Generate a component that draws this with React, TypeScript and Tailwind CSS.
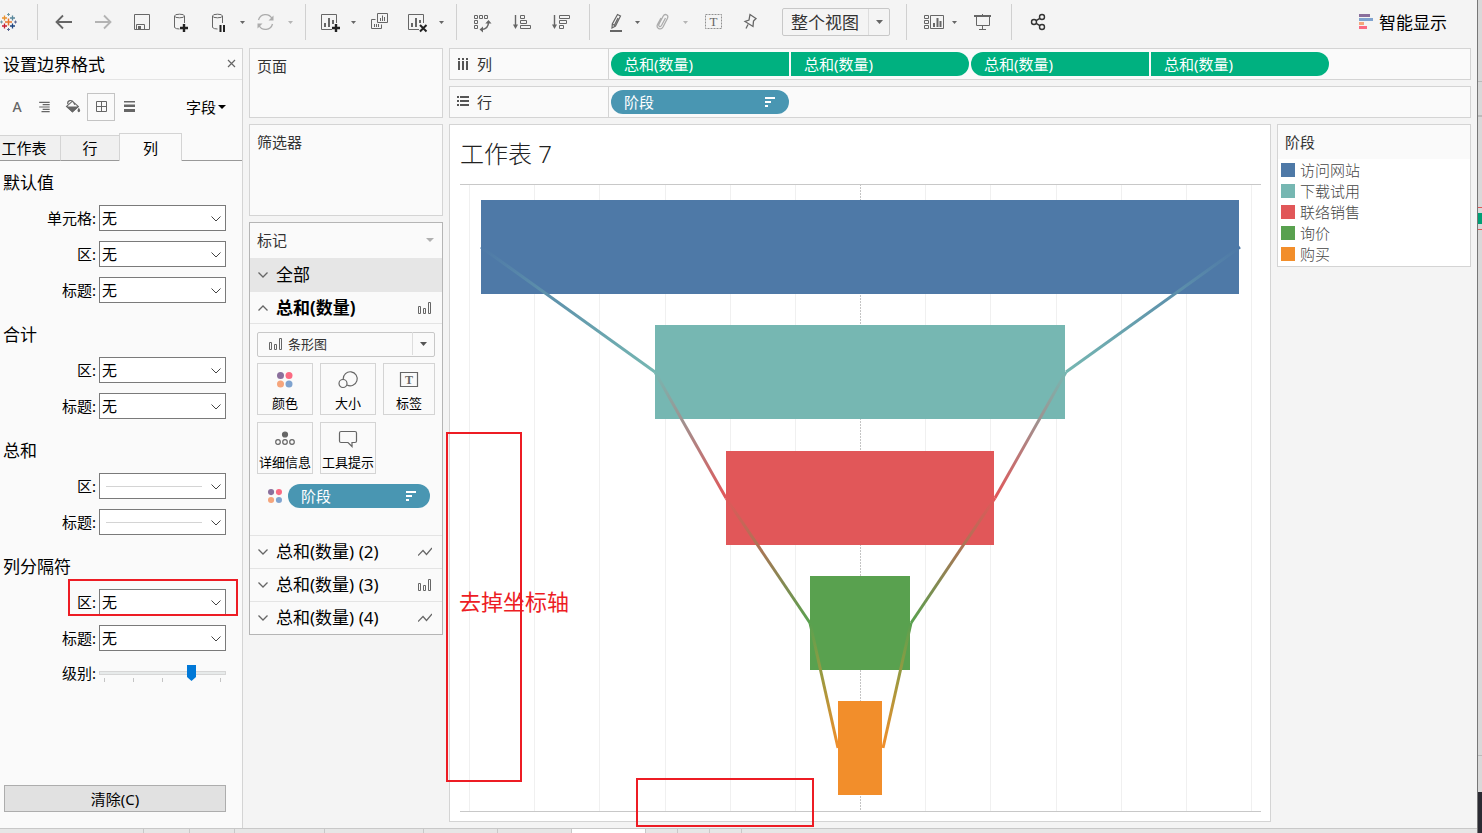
import type { ReactNode } from "react";

const shelfPills = [
  { label: "总和(数量)", shape: "rounded-l-full" },
  { label: "总和(数量)", shape: "rounded-r-full" },
  { label: "总和(数量)", shape: "rounded-l-full" },
  { label: "总和(数量)", shape: "rounded-r-full" },
];

const stages = [
  { name: "访问网站", color: "#4e79a7", swatch: "bg-[#4e79a7]", x: 21, width: 758, y: 16 },
  { name: "下载试用", color: "#76b7b2", swatch: "bg-[#76b7b2]", x: 195, width: 410, y: 141 },
  { name: "联络销售", color: "#e15759", swatch: "bg-[#e15759]", x: 266, width: 268, y: 267 },
  { name: "询价", color: "#59a14f", swatch: "bg-[#59a14f]", x: 350, width: 100, y: 392 },
  { name: "购买", color: "#f28e2b", swatch: "bg-[#f28e2b]", x: 378, width: 44, y: 517 },
];

const sections = [
  { title: "默认值", rows: [["单元格:", "无"], ["区:", "无"], ["标题:", "无"]] },
  { title: "合计", rows: [["区:", "无"], ["标题:", "无"]] },
  { title: "总和", rows: [["区:", ""], ["标题:", ""]] },
  { title: "列分隔符", rows: [["区:", "无"], ["标题:", "无"]] },
];

function Icon({ children, className = "size-6" }: { children: ReactNode; className?: string }) {
  return (
    <svg viewBox="0 0 24 24" className={className} fill="none" stroke="currentColor" strokeWidth="1" aria-hidden="true">
      {children}
    </svg>
  );
}

function Tool({ label, className = "", children }: { label: string; className?: string; children: ReactNode }) {
  return (
    <button aria-label={label} className={`size-6 shrink-0 text-[#666] ${className}`}>
      <Icon>{children}</Icon>
    </button>
  );
}

function Caret({ label, className = "" }: { label: string; className?: string }) {
  return (
    <button aria-label={label} className={`flex h-6 w-2.5 shrink-0 items-center justify-center ${className}`}>
      <svg viewBox="0 0 5 3" className="h-[3px] w-[5px]" fill="currentColor" aria-hidden="true">
        <path d="M0 0h5L2.500 3z" />
      </svg>
    </button>
  );
}

function Separator({ className = "" }: { className?: string }) {
  return <div className={`h-9 w-px shrink-0 bg-[#d0d0d0] ${className}`} />;
}

function Cylinder() {
  return (
    <>
      <ellipse cx="12.5" cy="6" rx="5" ry="1.8" />
      <path d="M7.500 6v11.500q1.500 1.500 5 1.500M17.500 6v7" />
    </>
  );
}

function Toolbar() {
  return (
    <header className="flex h-12 shrink-0 items-center pb-1">
      <svg viewBox="0 0 18 18" className="size-[18px] shrink-0" fill="none" aria-hidden="true">
        <path d="M8.500 5.500v7M5 9h7" stroke="#e8762d" strokeWidth="1.500" />
        <path d="M4.500 2.500v5M2 5h5" stroke="#eb912c" strokeWidth="1.300" />
        <path d="M12.500 2.500v5M10 5h5" stroke="#59879b" strokeWidth="1.300" />
        <path d="M4.500 10.500v5M2 13h5" stroke="#c72035" strokeWidth="1.300" />
        <path d="M12.500 10.500v5M10 13h5" stroke="#1f447e" strokeWidth="1.300" />
        <path d="M8.500 0v3M7 1.500h3M0 9h3M1.500 7.500v3" stroke="#7099a6" />
        <path d="M14 9h3M15.500 7.500v3M8.500 15v3M7 16.500h3" stroke="#5c6692" />
      </svg>
      <Separator className="ml-[19px]" />
      <div className="ml-[15px] flex gap-3.5">
        <Tool label="撤消"><path d="M3.500 12H19M10 5.500L3.500 12l6.500 6.500" strokeWidth="1.800" /></Tool>
        <Tool label="重做" className="opacity-45"><path d="M4 12h15.500M13 5.500l6.500 6.500-6.500 6.500" strokeWidth="1.800" /></Tool>
        <Tool label="保存">
          <path d="M5.500 4.500h15v15h-15zM7.500 19.500v-5h8v5" />
          <path d="M9 16h3v3.500H9z" fill="currentColor" stroke="none" />
        </Tool>
        <Tool label="新建数据源">
          <Cylinder />
          <path d="M17 14v8M13 18h8" stroke="#222" strokeWidth="2.400" />
        </Tool>
        <Tool label="暂停自动更新">
          <Cylinder />
          <path d="M15.500 15v7M19 15v7" stroke="#222" strokeWidth="2" />
        </Tool>
      </div>
      <Caret label="更新选项" className="ml-2 text-[#666]" />
      <Tool label="运行更新" className="ml-1.5 opacity-50">
        <path d="M5.500 10a7.300 7.300 0 0 1 13.500-1.500M19.500 14a7.300 7.300 0 0 1-13.500 1.500" strokeWidth="1.300" />
        <path d="M20.500 5.500v5h-5zM4.500 18.500v-5h5z" fill="currentColor" stroke="none" />
      </Tool>
      <Caret label="运行选项" className="ml-2 text-[#b5b5b5]" />
      <Separator className="ml-2.5" />
      <Tool label="新建工作表" className="ml-3">
        <path d="M14 19.500H3.500v-15h15V13" />
        <path d="M7 17v-4M11 17V8M15 14v-4" strokeWidth="2" />
        <path d="M18 14v8M14 18h8" stroke="#222" strokeWidth="2.400" />
      </Tool>
      <Caret label="新建选项" className="ml-1.5 text-[#666]" />
      <Tool label="复制工作表" className="ml-2.5">
        <path d="M9.500 3.500h10v9h-10zM7.500 9.500h-4v9h10v-4" />
        <path d="M12.500 11V8M14.500 11V5.500M16.500 11V7M6.500 17v-3M8.500 17v-3M10.500 17v-3" />
      </Tool>
      <Tool label="清除工作表" className="ml-3.5">
        <path d="M13 19.500H2.500v-15h15V13" />
        <path d="M6 17v-4M10 17V8M14 13v-3" strokeWidth="2" />
        <path d="M14 15l6.500 6.500M20.500 15L14 21.500" stroke="#222" strokeWidth="2" />
      </Tool>
      <Caret label="清除选项" className="ml-1.5 text-[#666]" />
      <Separator className="ml-2.5" />
      <Tool label="交换行和列" className="ml-3.5">
        <path d="M3.500 5.500h3v3h-3zM8.500 5.500h3v3h-3zM13.500 5.500h3v3h-3zM3.500 10.500h3v3h-3zM3.500 15.500h3v3h-3z" />
        <path d="M17.500 12q0 7-7 7.500" strokeWidth="1.500" />
        <path d="M14.300 13.500l3.200-3.500 3 3.500zM12 16.500l-3.500 3 3.500 3z" fill="currentColor" stroke="none" />
      </Tool>
      <Tool label="升序排序" className="ml-3.5">
        <path d="M6.500 5v11" strokeWidth="1.400" />
        <path d="M4 14.500h5L6.500 19z" fill="currentColor" stroke="none" />
        <path d="M11.500 5.500h4v3h-4zM11.500 10.500h6v3h-6zM11.500 15.500h10v3h-10z" />
      </Tool>
      <Tool label="降序排序" className="ml-4">
        <path d="M5.500 5v11" strokeWidth="1.400" />
        <path d="M3 14.500h5L5.500 19z" fill="currentColor" stroke="none" />
        <path d="M10.500 5.500h10v3h-10zM10.500 10.500h7v3h-7zM10.500 15.500h4v3h-4z" />
      </Tool>
      <Separator className="ml-4" />
      <Tool label="突出显示" className="ml-3">
        <path d="M15.500 4.500l3 1.500-5 10-3.500 2 .3-4z M10.300 14l3.200 2M16 8l-3.500 7" strokeWidth="1.200" />
        <path d="M8 21h12" strokeWidth="2" />
      </Tool>
      <Caret label="突出显示选项" className="ml-1.5 text-[#666]" />
      <Tool label="组成员" className="ml-2 opacity-50">
        <path d="M15.500 8l-4 7.500c-1.200 2-3.500 1-2.600-1.200l4.200-8c1.800-3.200 6-1.500 4.400 2l-4.500 8.700c-2 3.500-7.500 1.500-5.500-2.500l3.500-6.500" strokeWidth="1.300" />
      </Tool>
      <Caret label="组选项" className="ml-1.5 text-[#b5b5b5]" />
      <Tool label="显示标记标签" className="ml-3">
        <path d="M3.500 4.500h16v14h-16z" strokeDasharray="2 1" opacity=".7" />
        <text x="11.500" y="16" textAnchor="middle" fill="currentColor" stroke="none" className="font-['Liberation_Serif',serif] text-[13px]">T</text>
      </Tool>
      <Tool label="固定轴" className="ml-3">
        <path d="M12 4.500l6 4-2.500 2.500-.5 5.500-8-5 4-1.500zM10 14.500l-2 4" strokeWidth="1.300" />
      </Tool>
      <div className="relative ml-5 h-7 w-[108px] shrink-0">
        <select aria-label="适合" className="h-full w-full appearance-none rounded-xs border border-[#c8c8c8] pt-0.5 pl-2 text-[17px] leading-6 text-[#333]">
          <option>整个视图</option>
        </select>
        <span className="pointer-events-none absolute inset-y-px right-px flex w-[21px] items-center justify-center border-l border-[#ddd] text-[#666]">
          <svg viewBox="0 0 7 4" className="h-1 w-[7px]" fill="currentColor"><path d="M0 0h7L3.500 4z" /></svg>
        </span>
      </div>
      <Separator className="ml-4" />
      <Tool label="显示/隐藏卡" className="ml-3.5">
        <path d="M3.500 5.500h4v3h-4zM3.500 10.500h4v3h-4zM3.500 15.500h4v3h-4zM9.500 5.500h13v13h-13z" />
        <path d="M13 17v-4M16.500 17V8M19.500 17v-6" strokeWidth="2" />
      </Tool>
      <Caret label="卡选项" className="ml-1 text-[#666]" />
      <Tool label="演示模式" className="ml-3">
        <path d="M3 6h17" strokeWidth="2" />
        <path d="M5.500 6v9.500h13V6M11.500 4v2M11.500 15.500v4M8 19.500h7" />
      </Tool>
      <Separator className="ml-4" />
      <Tool label="共享" className="ml-3.5">
        <g stroke="#333" strokeWidth="1.400">
          <path d="M13.800 8.300l-3.600 2.400M10.200 13.300l3.600 2.400" />
          <circle cx="8" cy="12" r="2.500" />
          <circle cx="16" cy="7" r="2.500" />
          <circle cx="16" cy="17" r="2.500" />
        </g>
      </Tool>
      <button className="mr-[30px] ml-auto flex shrink-0 items-center gap-1.5 pt-0.5 text-[17px] leading-6">
        <svg viewBox="0 0 14 16" className="mb-0.5 h-4 w-3.5" aria-hidden="true">
          <path d="M0 0h11v3H0z" fill="#8a6f9c" />
          <path d="M0 4h14v3H0z" fill="#7fa3cf" />
          <path d="M0 8h5v3H0z" fill="#f5a57c" />
          <path d="M0 12h8v3H0z" fill="#fb6a82" />
        </svg>
        智能显示
      </button>
    </header>
  );
}

function FormatRow({ id, label, value }: { id: string; label: string; value: string }) {
  return (
    <div className="flex h-[26px] items-center gap-[3px]">
      <label htmlFor={id} className="w-24 text-right">{label}</label>
      <div className="relative h-[26px] flex-1">
        <select id={id} className="h-full w-full appearance-none border border-[#7a7a7a] bg-white pl-0.5">
          <option>{value}</option>
        </select>
        {value === "" && <span className="pointer-events-none absolute top-1/2 right-6 left-[7px] h-px bg-[#d4d4d4]" />}
        <svg viewBox="0 0 10 6" className="pointer-events-none absolute top-[11px] right-[5px] h-1.5 w-2.5" fill="none" stroke="#444" aria-hidden="true">
          <path d="M.5.500L5 5 9.500.500" />
        </svg>
      </div>
    </div>
  );
}

function FormatPanel() {
  return (
    <aside className="flex w-[243px] shrink-0 flex-col border-t border-r border-[#d4d4d4] bg-[#fafafa] text-[15px] leading-5">
      <div className="flex h-[31px] items-center justify-between border-b border-[#e4e4e4] pt-0.5 pr-1.5 pl-[3px]">
        <h2 className="text-[17px] leading-6">设置边界格式</h2>
        <button aria-label="关闭" className="mb-1">
          <svg viewBox="0 0 9 9" className="size-[9px]" stroke="#666" strokeWidth="1.200"><path d="M1 1l7 7M8 1L1 8" /></svg>
        </button>
      </div>
      <div className="flex h-[53px] items-center pr-4 pl-[3px] text-[#666]">
        <button aria-label="字体" className="size-7 text-sm leading-7 font-medium">A</button>
        <button aria-label="对齐" className="size-7"><Icon className="size-7">
          <path d="M7 8h9M10 10h6M7 12h9M10 14h6M9 16h7" />
        </Icon></button>
        <button aria-label="阴影" className="size-7"><Icon className="size-7">
          <path d="M6.500 11.500l5-4.500 5 4.500-5 4.500zM7.500 9.500c-.5-3.500 3.500-4 5-1.500l1 2" />
          <path d="M6.500 11.500h10.500l-5.500 5.300zM17 12.500l1.200 2.300q-.2 1.800-1.200 1.800t-1.200-1.800z" fill="currentColor" stroke="none" />
        </Icon></button>
        <button aria-label="边界" aria-pressed="true" className="flex size-7 items-center justify-center border border-[#c4c4c4]">
          <svg viewBox="0 0 11 11" className="size-[11px]" fill="none" stroke="currentColor"><path d="M.5.500h10v10H.5zM5.500 0v11M0 5.500h11" /></svg>
        </button>
        <button aria-label="线" className="flex size-7 items-center justify-center">
          <svg viewBox="0 0 11 11" className="size-[11px]" fill="currentColor"><path d="M0 0h11v1.500H0zM0 3.500h11V6H0zM0 8h11v3H0z" /></svg>
        </button>
        <button className="ml-auto flex items-center gap-0.5 text-black">
          字段
          <svg viewBox="0 0 8 4" className="h-1 w-2" fill="currentColor"><path d="M0 0h8L4 4z" /></svg>
        </button>
      </div>
      <div role="tablist" className="flex h-7 items-end">
        <button role="tab" className="h-[26px] w-[61px] border-t border-r border-b border-[#d4d4d4] border-b-[#999] bg-[#f0f0f0] pr-3">工作表</button>
        <button role="tab" className="h-[26px] w-[58px] border-t border-b border-[#d4d4d4] border-b-[#999] bg-[#f0f0f0]">行</button>
        <button role="tab" aria-selected="true" className="h-7 w-[63px] border-x border-t border-[#d4d4d4]">列</button>
        <div className="h-full flex-1 border-b border-[#999]" />
      </div>
      <div className="space-y-5 pt-2.5 pr-4">
        {sections.map((section, i) => (
          <section key={section.title} className="space-y-2.5">
            <h3 className="pl-[3px] text-[17px] leading-6">{section.title}</h3>
            {section.rows.map(([label, value], j) => (
              <FormatRow key={j} id={`border-${i}-${j}`} label={label} value={value} />
            ))}
            {i === sections.length - 1 && (
              <div className="flex h-6 items-center gap-[3px]">
                <label htmlFor="level" className="w-24 text-right">级别:</label>
                <div className="relative flex h-4 flex-1 items-center">
                  <input
                    id="level"
                    type="range"
                    min="0"
                    max="4"
                    defaultValue="3"
                    className="h-4 w-full appearance-none bg-transparent [&::-webkit-slider-runnable-track]:h-1 [&::-webkit-slider-runnable-track]:border [&::-webkit-slider-runnable-track]:border-[#d6d6d6] [&::-webkit-slider-runnable-track]:bg-[#e7eaea] [&::-webkit-slider-thumb]:-mt-[7px] [&::-webkit-slider-thumb]:h-4 [&::-webkit-slider-thumb]:w-[9px] [&::-webkit-slider-thumb]:appearance-none [&::-webkit-slider-thumb]:bg-[#0078d7] [&::-webkit-slider-thumb]:[clip-path:polygon(0_0,100%_0,100%_75%,50%_100%,0_75%)]"
                  />
                  <div className="pointer-events-none absolute inset-x-[5px] top-[13px] flex justify-between">
                    {[0, 1, 2, 3, 4].map((tick) => (
                      <span key={tick} className={tick === 3 ? "h-1 w-px" : "h-1 w-px bg-[#c4c4c4]"} />
                    ))}
                  </div>
                </div>
              </div>
            )}
          </section>
        ))}
      </div>
      <button className="mt-auto mr-4 mb-4 ml-1 h-[27px] border border-[#adadad] bg-[#e1e1e1]">清除(C)</button>
    </aside>
  );
}

function BarsIcon() {
  return (
    <svg viewBox="0 0 14 12" className="h-3 w-3.5 shrink-0" fill="none" stroke="#666" aria-hidden="true">
      <path d="M.5 4.500h2v7h-2zM5.500 6.500h2v5h-2zM10.500.500h2v11h-2z" />
    </svg>
  );
}

function LineIcon() {
  return (
    <svg viewBox="0 0 14 12" className="h-3 w-3.5 shrink-0" fill="none" stroke="#666" strokeWidth="1.200" aria-hidden="true">
      <path d="M0 9.500l5-5 3.500 4L14 2" />
    </svg>
  );
}

function Chevron({ up = false }: { up?: boolean }) {
  return (
    <svg viewBox="0 0 10 6" className="h-1.5 w-2.5 shrink-0" fill="none" stroke="#666" strokeWidth="1.300" aria-hidden="true">
      <path d={up ? "M.5 5.500L5 1l4.500 4.500" : "M.5.500L5 5 9.500.500"} />
    </svg>
  );
}

function ColorDots({ className }: { className: string }) {
  return (
    <svg viewBox="0 0 16 16" className={className} aria-hidden="true">
      <circle cx="3.500" cy="3.500" r="3.500" fill="#8a6f9c" />
      <circle cx="12.500" cy="3.500" r="3.500" fill="#fb6a82" />
      <circle cx="3.500" cy="12.500" r="3.500" fill="#f5a57c" />
      <circle cx="12.500" cy="12.500" r="3.500" fill="#7fa3cf" />
    </svg>
  );
}

function SortedPill({ className }: { className: string }) {
  return (
    <button className={`flex h-6 items-center justify-between rounded-full bg-[#4996b2] pr-3.5 pl-[13px] text-[15px] leading-5 text-white ${className}`}>
      阶段
      <svg viewBox="0 0 10 10" className="size-2.5" fill="currentColor" aria-hidden="true">
        <path d="M0 0h10v2H0zM0 4h6v2H0zM0 8h3v2H0z" />
      </svg>
    </button>
  );
}

function MarkTile({ label, children }: { label: string; children: ReactNode }) {
  return (
    <button className="flex h-[52px] flex-col items-center justify-between border border-[#d4d4d4] pt-1 pb-0.5 text-[13px] leading-[18px] whitespace-nowrap">
      <Icon>{children}</Icon>
      {label}
    </button>
  );
}

function MarksCard() {
  return (
    <section className="border border-[#b5b5b5] bg-[#fafafa]">
      <div className="flex h-[35px] items-center justify-between pr-2 pb-0.5 pl-[7px]">
        <h2 className="text-[15px] leading-5 text-[#333]">标记</h2>
        <svg viewBox="0 0 8 4" className="h-1 w-2" fill="#b0b0b0"><path d="M0 0h8L4 4z" /></svg>
      </div>
      <button className="flex h-[34px] w-full items-center gap-2 bg-[#e6e6e6] pl-2 text-[17px] leading-6">
        <Chevron />全部
      </button>
      <button className="flex h-8 w-full items-center gap-2 border-b border-[#e4e4e4] pr-2.5 pl-2 text-[17px] leading-6 font-bold">
        <Chevron up />
        <span className="flex-1 text-left">总和(数量)</span>
        <BarsIcon />
      </button>
      <div className="px-[7px] pt-[7px] pb-[27px]">
        <div className="relative h-[25px]">
          <select aria-label="标记类型" className="h-full w-full appearance-none rounded-xs border border-[#c8c8c8] pl-[30px] text-[13px] leading-5 text-[#333]">
            <option>条形图</option>
          </select>
          <span className="pointer-events-none absolute inset-y-0 left-3 flex items-center"><BarsIcon /></span>
          <span className="pointer-events-none absolute inset-y-px right-px flex w-[22px] items-center justify-center border-l border-[#ddd] text-[#555]">
            <svg viewBox="0 0 7 4" className="h-1 w-[7px]" fill="currentColor"><path d="M0 0h7L3.500 4z" /></svg>
          </span>
        </div>
        <div className="mt-[7px] grid grid-cols-[56px_56px_52px] gap-[7px]">
          <MarkTile label="颜色">
            <g stroke="none">
              <circle cx="7.500" cy="7.500" r="3.500" fill="#8a6f9c" />
              <circle cx="16" cy="7.500" r="3.500" fill="#fb6a82" />
              <circle cx="7.500" cy="16" r="3.500" fill="#f5a57c" />
              <circle cx="16" cy="16" r="3.500" fill="#7fa3cf" />
            </g>
          </MarkTile>
          <MarkTile label="大小">
            <g stroke="#666" strokeWidth="1.200">
              <path d="M7.200 11a7 7 0 1 1 3.800 6" />
              <circle cx="7" cy="15.500" r="4" />
            </g>
          </MarkTile>
          <MarkTile label="标签">
            <g stroke="#666">
              <path d="M3.500 4.500h17v14h-17z" strokeWidth="1.200" />
              <text x="12" y="15.500" textAnchor="middle" fill="#666" stroke="none" className="font-['Liberation_Serif',serif] text-[12px] font-bold">T</text>
            </g>
          </MarkTile>
          <MarkTile label="详细信息">
            <g stroke="#666" strokeWidth="1.200">
              <circle cx="12" cy="7.500" r="2.500" fill="#666" />
              <circle cx="5" cy="15" r="2.300" />
              <circle cx="12" cy="15" r="2.300" />
              <circle cx="19" cy="15" r="2.300" />
            </g>
          </MarkTile>
          <MarkTile label="工具提示">
            <path d="M5 4.500h14q1.500 0 1.500 1.500v8q0 1.500-1.500 1.500h-3v4l-4-4H5q-1.500 0-1.500-1.500V6q0-1.500 1.500-1.500z" stroke="#666" strokeWidth="1.200" />
          </MarkTile>
        </div>
        <div className="mt-2.5 flex items-center gap-1.5 pr-[5px] pl-[11px]">
          <ColorDots className="size-3.5" />
          <SortedPill className="flex-1" />
        </div>
      </div>
      {["(2)", "(3)", "(4)"].map((n) => (
        <button key={n} className="flex h-[33px] w-full items-center gap-2 border-t border-[#e4e4e4] pr-2.5 pl-2 text-[17px] leading-6">
          <Chevron />
          <span className="flex-1 text-left">总和(数量) {n}</span>
          {n === "(3)" ? <BarsIcon /> : <LineIcon />}
        </button>
      ))}
    </section>
  );
}

function Shelf({ label, icon, children }: { label: string; icon: ReactNode; children: ReactNode }) {
  return (
    <div className="flex h-8 border border-[#d4d4d4] bg-[#fafafa] text-[15px] leading-5">
      <div className="flex w-[159px] shrink-0 items-center gap-2 border-r border-[#d4d4d4] pl-[7px] text-[#333]">
        {icon}
        {label}
      </div>
      <div className="flex items-center gap-0.5 pl-0.5">{children}</div>
    </div>
  );
}

function FunnelChart() {
  const gridX = [9, 74, 139, 205, 270, 335, 465, 530, 596, 661, 726, 791];
  return (
    <svg viewBox="0 0 801 628" className="h-auto w-full" role="img" aria-label="漏斗图">
      <defs>
        {stages.slice(1).map((stage, i) => (
          <linearGradient key={stage.name} id={`seg-${i}`} gradientUnits="userSpaceOnUse" x1="0" x2="0" y1={stages[i].y + 47} y2={stage.y + 47}>
            <stop offset="0" stopColor={stages[i].color} />
            <stop offset="1" stopColor={stage.color} />
          </linearGradient>
        ))}
      </defs>
      {gridX.map((x) => (
        <rect key={x} x={x} y="1" width="1" height="626" fill="#f0f0f0" />
      ))}
      <path d="M400.500 0v627" stroke="#c4c4c4" strokeDasharray="2 1" />
      <path d="M0 .5h801M0 627.500h801" stroke="#c8c8c8" />
      {stages.map((stage) => (
        <rect key={stage.name} x={stage.x} y={stage.y} width={stage.width} height="94" fill={stage.color} />
      ))}
      {stages.slice(1).map((stage, i) => {
        const from = stages[i];
        return (
          <g key={stage.name} stroke={`url(#seg-${i})`} strokeWidth="3">
            <path d={`M${from.x} ${from.y + 47}L${stage.x} ${stage.y + 47}`} />
            <path d={`M${from.x + from.width + 1} ${from.y + 47}L${stage.x + stage.width + 1} ${stage.y + 47}`} />
          </g>
        );
      })}
    </svg>
  );
}

function Worksheet() {
  return (
    <main className="flex min-w-0 flex-1 flex-col gap-1.5">
      <Shelf
        label="列"
        icon={
          <svg viewBox="0 0 12 12" className="size-3" fill="#555" aria-hidden="true">
            <path d="M1 0h2v2H1zM5 0h2v2H5zM9 0h2v2H9zM1 3h2v9H1zM5 3h2v9H5zM9 3h2v9H9z" />
          </svg>
        }
      >
        {shelfPills.map((pill, i) => (
          <button key={i} className={`h-6 w-[178px] bg-[#00b180] pl-[13px] text-left text-white ${pill.shape}`}>{pill.label}</button>
        ))}
      </Shelf>
      <Shelf
        label="行"
        icon={
          <svg viewBox="0 0 12 12" className="size-3" fill="#555" aria-hidden="true">
            <path d="M0 0h2v2H0zM0 4h2v2H0zM0 8h2v2H0zM3 0h9v2H3zM3 4h9v2H3zM3 8h9v2H3z" />
          </svg>
        }
      >
        <SortedPill className="w-[178px]" />
      </Shelf>
      <div className="flex flex-1 gap-1.5">
        <section className="min-w-0 flex-1 border border-[#d4d4d4] bg-white pr-[9px] pb-[9px] pl-2.5">
          <h1 className="flex h-[59px] items-center pb-0.5 text-2xl font-light text-[#222]">工作表 7</h1>
          <FunnelChart />
        </section>
        <section className="w-[194px] shrink-0 self-start border border-[#d4d4d4] bg-white pb-0.5">
          <h2 className="flex h-[34px] items-center bg-[#fafafa] pl-[7px] text-[15px] leading-5 text-[#333]">阶段</h2>
          <ul>
            {stages.map((stage) => (
              <li key={stage.name} className="flex h-[21px] items-center gap-[5px] pl-[3px] text-[15px] leading-5 font-light text-[#444]">
                <span className={`size-3.5 ${stage.swatch}`} />
                {stage.name}
              </li>
            ))}
          </ul>
        </section>
      </div>
    </main>
  );
}

function SheetTabs() {
  return (
    <div className="flex h-[5px] shrink-0 border-t border-[#c8c8c8] bg-[#e6e6e6]">
      <span className="w-36 border-r border-[#c8c8c8]" />
      <span className="w-[46px] border-r border-[#c8c8c8]" />
      <span className="w-[45px] border-r border-[#c8c8c8]" />
      <span className="w-[90px] border-r border-[#c8c8c8]" />
      <span className="w-[99px] border-r border-[#c8c8c8]" />
      <span className="w-[74px] border-r border-[#c8c8c8]" />
      <span className="w-[74px] border-r border-[#c8c8c8]" />
      <span className="w-[74px] border-r border-[#c8c8c8] bg-white" />
      <span className="w-8 border-r border-[#c8c8c8]" />
      <span className="w-8 border-r border-[#c8c8c8]" />
      <span className="w-8 border-r border-[#c8c8c8]" />
    </div>
  );
}

export default function App() {
  return (
    <div className="flex min-h-screen bg-[#f4f4f4] font-['Noto_Sans','Noto_Sans_CJK_SC',sans-serif] text-black">
      <div className="relative flex min-w-0 flex-1 flex-col">
        <Toolbar />
        <div className="flex flex-1 gap-1.5 pr-1.5 pb-1.5">
          <div className="-mb-1.5 flex">
            <FormatPanel />
          </div>
          <div className="flex w-[194px] shrink-0 flex-col gap-1.5">
            <section className="h-[70px] border border-[#d4d4d4] bg-[#fafafa] px-[7px] py-[7px] text-[15px] leading-5 text-[#333]">页面</section>
            <section className="h-[92px] border border-[#d4d4d4] bg-[#fafafa] px-[7px] py-[7px] text-[15px] leading-5 text-[#333]">筛选器</section>
            <MarksCard />
          </div>
          <Worksheet />
        </div>
        <SheetTabs />

        {/* Red call-outs drawn over the workspace */}
        <div className="pointer-events-none absolute top-[579px] left-[68px] h-[37px] w-[170px] border-2 border-[#ed1c24]" />
        <div className="pointer-events-none absolute top-[432px] left-[446px] h-[350px] w-[76px] border-2 border-[#ed1c24]" />
        <div className="pointer-events-none absolute top-[778px] left-[636px] h-[49px] w-[178px] border-2 border-[#ed1c24]" />
        <p className="pointer-events-none absolute top-[585px] left-[459px] text-[22px] leading-8 text-[#ed1c24]">去掉坐标轴</p>
      </div>

      {/* Edge of the window behind */}
      <div className="flex w-[5px] shrink-0 flex-col border-l border-[#777] bg-[#d9d9d9]">
        <div className="h-[82px] border-b border-[#bbb]" />
        <div className="h-[35px] border-b-2 border-[#bbb]" />
        <div className="h-[90px]" />
        <div className="h-[23px] border-y border-[#e15759] py-[5px]"><div className="h-full bg-[#00a076]" /></div>
        <div className="h-[526px] border-b border-[#bbb]" />
        <div className="h-9" />
        <div className="flex-1 bg-[#2b2b33]" />
      </div>
    </div>
  );
}
